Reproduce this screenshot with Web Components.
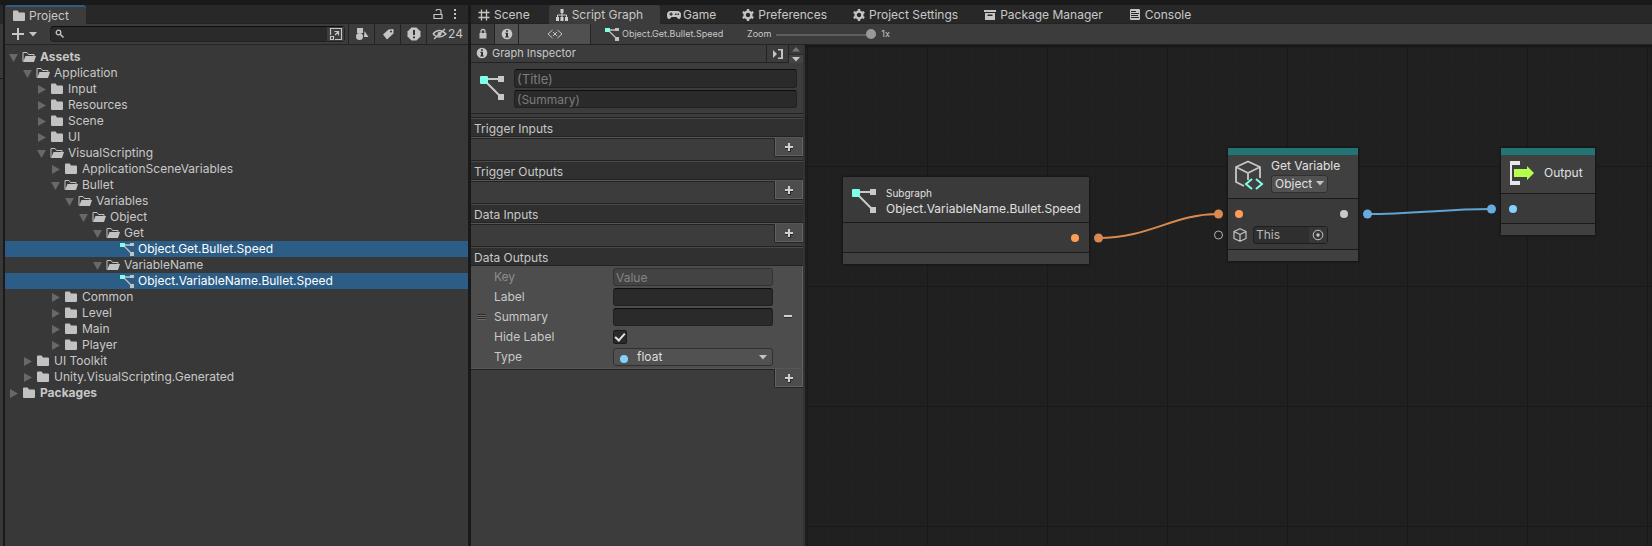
<!DOCTYPE html>
<html lang="en">
<head>
<meta charset="utf-8">
<title>Script Graph</title>
<style>
html,body{margin:0;height:100%}
body{background:#191919;color:#c8c8c8;font:12px/16px Inter,"Liberation Sans",sans-serif;overflow:hidden}
</style>
</head>
<body>
<editor-app></editor-app>
<script>
const ICONS = {
  folder:['0 0 14 14','<path fill="#c2c2c2" d="M1 2.500q0-1 1-1h3.600l1.400 2h5q1 0 1 1v6.500q0 1-1 1h-10q-1 0-1-1z"/>'],
  open:['0 0 14 14','<path fill="none" stroke="#c2c2c2" d="M1 11.500V2.500h4l1.500 2h5.500v1.500"/><path fill="#c2c2c2" d="M3.500 6h10.500l-2 6h-11z"/>'],
  graph:['0 0 14 14','<path fill="none" stroke="#c2c2c2" stroke-width="1.300" d="M3 3h8M3 3l8.500 8.500"/><path fill="#7fffe6" d="M0 1h5v4h-5z"/><path fill="#c2c2c2" d="M10 1h4v3h-4zM10 10h4v4h-4z"/>'],
  graphBig:['0 0 26 26','<path fill="none" stroke="#c8c8c8" stroke-width="2" d="M5 4h17M5 5l17 17"/><rect x="1" y="1" width="8" height="8" rx="1" fill="#7fffe6"/><path fill="#c8c8c8" d="M19 1h6v6h-6zM19 19h6v6h-6z"/>'],
  grid:['0 0 12 12','<path fill="none" stroke="#c4c4c4" stroke-width="1.300" d="M3.500 0.500v11M8.500 0.500v11M0.500 3.500h11M0.500 8.500h11"/>'],
  tree:['0 0 12 12','<path fill="#d0d0d0" d="M4.500 0h3v4h-3zM0 8h3v4h-3zM4.500 8h3v4h-3zM9 8h3v4h-3z"/><path fill="none" stroke="#d0d0d0" d="M6 3v6M1.500 9v-3h9v3"/>'],
  game:['0 0 14 12','<path fill="#c4c4c4" fill-rule="evenodd" d="M3.500 2h7a3.500 3.500 0 0 1 3.500 4c0 3-1 4.500-2.500 4q-1-.3-2-2h-5q-1 1.700-2 2C1 10.500 0 9 0 6a3.500 3.500 0 0 1 3.500-4zM3.500 3.500v1h-1v1.200h1v1h1.200v-1h1v-1.200h-1v-1zM8 4.500h1.500v1.500H8zM10.500 4.500h1.500v1.500h-1.500z"/>'],
  gear:['0 0 12 12','<circle cx="6" cy="6" r="3.400" fill="none" stroke="#c4c4c4" stroke-width="2.400"/><path stroke="#c4c4c4" stroke-width="2.400" d="M6 0v2.500M6 9.500V12M0.700 3l2.300 1.300M9 7.700L11.300 9M0.700 9L3 7.700M9 4.300L11.300 3"/>'],
  box:['0 0 12 12','<path fill="#c4c4c4" fill-rule="evenodd" d="M0 1h12v2H0zM1 4h10v7H1zM3.500 5.500v1.500h5V5.500z"/>'],
  console:['0 0 12 12','<rect x="1" y="0" width="10" height="11" rx="1" fill="#c4c4c4"/><path stroke="#282828" d="M2 2.500h5M2 4.500h8M2 6.500h7M2 8.500h8"/>'],
  search:['0 0 12 12','<circle cx="4.500" cy="4.500" r="2.300" fill="none" stroke="#c4c4c4" stroke-width="1.300"/><path stroke="#c4c4c4" stroke-width="1.500" d="M6.200 6.200l3.300 3.300"/>'],
  popout:['0 0 14 14','<path fill="none" stroke="#c4c4c4" stroke-width="1.200" d="M1.500 8V1.500h11v11H6M1.500 9.500h3v3h-3zM6 8l3.500-3.500M5.500 4.500h4v4"/>'],
  shapes:['0 0 14 14','<circle cx="4.500" cy="9.500" r="3.500" fill="#c4c4c4"/><path fill="#c4c4c4" d="M2 1h6v5H2zM9.500 4l4 6H9z"/>'],
  tag:['0 0 14 14','<path fill="#c4c4c4" fill-rule="evenodd" d="M7.500 2.500l4.500-.500q.500 0 .500.500v4l-6.500 6-4-5zM9 4.500a1 1 0 1 0 2 0a1 1 0 0 0-2 0"/>'],
  alert:['0 0 14 14','<path fill="#c4c4c4" d="M4.500.500h5l4 4v5l-4 4h-5l-4-4v-5z"/><path fill="#333" d="M6 3h2v5H6zM6 9.500h2v1.700H6z"/>'],
  eye:['0 0 16 14','<path fill="none" stroke="#c4c4c4" stroke-width="1.400" d="M1 7q6-7 13 0q-7 6-13 0M2 12L13 2"/><circle cx="7.500" cy="7" r="2" fill="#c4c4c4"/>'],
  unlock:['0 0 10 12','<path fill="none" stroke="#c4c4c4" stroke-width="1.200" d="M1 6.500h8v4H1zM8 6V3q0-1.500-1.500-1.500h-2Q3 1.500 3 3"/>'],
  lock:['0 0 10 12','<path fill="none" stroke="#c4c4c4" stroke-width="1.300" d="M3 6V3.500q0-2 2-2t2 2V6"/><path fill="#c4c4c4" d="M1.500 5h7v5.500h-7z"/>'],
  dots:['0 0 4 12','<path fill="#c4c4c4" d="M1 1h2v2H1zM1 5h2v2H1zM1 9h2v2H1z"/>'],
  info:['0 0 12 12','<circle cx="6" cy="6" r="5.300" fill="#c8c8c8"/><path fill="#333" d="M5 2.200h2v1.600H5zM4.300 4.800H7v3.700h.800v1H4.200v-1H5V5.800h-.700z"/>'],
  vars:['0 0 16 12','<path fill="none" stroke="#c4c4c4" d="M5.500 2L1 6l4.500 4M10.500 2L15 6l-4.500 4M6 4l4 4M10 4L6 8"/>'],
  plus:['0 0 12 12','<path fill="#c8c8c8" d="M5 0h2v5h5v2H7v5H5V7H0V5h5z"/>'],
  plusBold:['0 0 10 10','<path fill="#262626" d="M4 7h3v3H4zM1 6h8v1H1z"/><path fill="#d0d0d0" d="M4 1h2v3h3v2H6v3H4V6H1V4h3z"/>'],
  down:['0 0 8 5','<path fill="#c4c4c4" d="M0 0h8L4 4.500z"/>'],
  up:['0 0 8 5','<path fill="#767676" d="M0 4.500h8L4 0z"/>'],
  exp:['0 0 9 9','<path fill="#686868" d="M0 1h9L4.500 9z"/>'],
  col:['0 0 9 9','<path fill="#686868" d="M1 0v9l8-4.500z"/>'],
  dock:['0 0 10 10','<path fill="#c4c4c4" d="M0 1l4 4-4 4zM5 0h5v10H5V8.500h3v-7H5z"/>'],
  handle:['0 0 10 6','<path stroke="#292929" d="M0 .500h9M0 2.500h9M0 4.500h9"/><path stroke="#6a6a6a" d="M0 1.500h9M0 3.500h9M0 5.500h9"/>'],
  minus:['0 0 8 4','<path fill="#d0d0d0" d="M0 0h8v2H0z"/><path fill="#303030" d="M0 2h8v1H0z"/>'],
  cubeVar:['0 0 30 30','<path fill="none" stroke="#c8c8c8" stroke-width="1.800" stroke-linejoin="round" d="M10 26L2 22V7l12-5.500L26 7v11M2 7l12 6 12-6M14 13v7"/><path fill="none" stroke="#7fffe6" stroke-width="2" d="M18 19l-6 5 6 5M22 19l6 5-6 5"/>'],
  cube:['0 0 14 14','<path fill="none" stroke="#c4c4c4" stroke-width="1.200" stroke-linejoin="round" d="M1 3.500L7 .700l6 2.800v7L7 13.300l-6-2.800zM1 3.500l6 3 6-3M7 6.500v7"/>'],
  target:['0 0 12 12','<circle cx="6" cy="6" r="4.800" fill="none" stroke="#c4c4c4"/><circle cx="6" cy="6" r="1.700" fill="#c4c4c4"/>'],
  output:['0 0 26 26','<path fill="#e8e8e8" d="M1 1h10v4H3v16h8v4H1z"/><path fill="#b5ff4f" d="M5 9h13V6l7 7-7 7v-3H5z"/>']
};

function define(name, css, html, setup){
  const t = document.createElement('template');
  t.innerHTML = `<style>*{box-sizing:border-box}button,input,select{font:inherit;color:inherit;margin:0;border-radius:0}button{border:0;padding:0;background:none;display:flex;align-items:center;justify-content:center}${css}</style>${html}`;
  customElements.define(name, class extends HTMLElement{
    connectedCallback(){
      if(this.shadowRoot) return;
      this.attachShadow({mode:'open'}).append(t.content.cloneNode(true));
      if(setup) setup(this, this.shadowRoot);
    }
  });
}

customElements.define('ui-icon', class extends HTMLElement{
  static observedAttributes = ['name'];
  constructor(){ super(); this.attachShadow({mode:'open'}); }
  attributeChangedCallback(){
    const [box, body] = ICONS[this.getAttribute('name')];
    const [, , w, h] = box.split(' ');
    this.shadowRoot.innerHTML = `<style>:host{display:block;flex:none;line-height:0}svg{display:block}</style><svg viewBox="${box}" width="${w}" height="${h}" aria-hidden="true">${body}</svg>`;
  }
});

define('dock-tab', `
:host{display:flex;height:19px}
:host([active]){background:#3c3c3c;border-radius:3px 3px 0 0}
:host([focused]){border-top:2px solid #2c5d87}
button{padding:1px 19px 0 7px;gap:3px;white-space:nowrap}
:host([active]) button{padding-right:17px}
.i{width:13px;display:flex}
:host([focused]) button{padding:0 17px 0 7px}
:host([focused]) .i{width:14px}
`, '<button role="tab"><span class="i"><ui-icon></ui-icon></span><slot></slot></button>', (el, root) =>
  root.querySelector('ui-icon').setAttribute('name', el.getAttribute('icon')));

define('tree-row', `
:host{display:flex;height:16px;align-items:center;padding-left:calc(4px + var(--depth) * 14px)}
:host([selected]){background:#2c5d87;color:#fff}
:host([bold]){font-weight:700}
.a{width:9px;margin-right:4px}
.n{margin-left:4px;white-space:nowrap}
`, '<span class="a"></span><ui-icon class="k"></ui-icon><span class="n"><slot></slot></span>', (el, root) => {
  const kind = el.getAttribute('kind');
  el.style.setProperty('--depth', el.getAttribute('depth'));
  root.querySelector('.k').setAttribute('name', kind);
  if(kind !== 'graph') root.querySelector('.a').innerHTML = `<ui-icon name="${kind === 'open' ? 'exp' : 'col'}"></ui-icon>`;
});

define('project-panel', `
:host{display:flex;flex-direction:column;background:#383838;min-width:0}
.tabs{display:flex;height:19px;background:#282828;align-items:stretch;border-bottom:1px solid #232323}
.tabs .r{margin-left:auto;display:flex;align-items:center;gap:10px;padding-right:11px}
.bar{display:flex;height:21px;background:#3c3c3c;border-bottom:1px solid #232323;align-items:stretch}
.add{gap:5px;width:38px;margin-right:7px}
.search{flex:1;display:flex;align-items:center;margin:2px 3px 2px 0;background:#2a2a2a;border:1px solid #212121;border-top-color:#0d0d0d;border-radius:4px;padding-left:3px;min-width:0}
.search input{flex:1;min-width:0;background:none;border:0;outline:0;height:14px;padding:0}
.search button{width:17px;height:14px;background:#3c3c3c}
.bar>.t{width:26px;border-left:1px solid #232323}
.bar>.e{width:42px}
.tree{padding-top:4px}
`, `
<div class="tabs" role="tablist"><dock-tab focused active icon="folder">Project</dock-tab>
<div class="r"><button aria-label="Lock"><ui-icon name="unlock"></ui-icon></button><button aria-label="Menu"><ui-icon name="dots"></ui-icon></button></div></div>
<div class="bar"><button class="add" aria-label="Create"><ui-icon name="plus"></ui-icon><ui-icon name="down"></ui-icon></button>
<div class="search"><ui-icon name="search"></ui-icon><input type="text" aria-label="Search"><button aria-label="Open search"><ui-icon name="popout"></ui-icon></button></div>
<button class="t" aria-label="Type"><ui-icon name="shapes"></ui-icon></button><button class="t" aria-label="Label"><ui-icon name="tag"></ui-icon></button><button class="t" aria-label="Log type"><ui-icon name="alert"></ui-icon></button><button class="t e"><ui-icon name="eye"></ui-icon>24</button></div>
<div class="tree" role="tree"></div>`, (el, root) => {
  const rows = [[0,'open','Assets'],[1,'open','Application'],[2,'folder','Input'],[2,'folder','Resources'],[2,'folder','Scene'],[2,'folder','UI'],[2,'open','VisualScripting'],[3,'folder','ApplicationSceneVariables'],[3,'open','Bullet'],[4,'open','Variables'],[5,'open','Object'],[6,'open','Get'],[7,'graph','Object.Get.Bullet.Speed'],[6,'open','VariableName'],[7,'graph','Object.VariableName.Bullet.Speed'],[3,'folder','Common'],[3,'folder','Level'],[3,'folder','Main'],[3,'folder','Player'],[1,'folder','UI Toolkit'],[1,'folder','Unity.VisualScripting.Generated'],[0,'folder','Packages']];
  root.querySelector('.tree').innerHTML = rows.map(([d,k,n]) =>
    `<tree-row role="treeitem" depth="${d}" kind="${k}" ${k === 'graph' ? 'selected' : ''} ${d ? '' : 'bold'}>${n}</tree-row>`).join('');
});

define('port-section', `
:host{display:block}
h3{margin:0;height:19px;padding:1px 3px 0;font:inherit;line-height:17px;background:#303030;border-top:1px solid #484848;border-bottom:1px solid #232323}
.line{border-top:1px solid #565656;display:flex;height:24px;border-bottom:1px solid #232323}
.line::before{content:"";flex:1;border-top:1px solid #232323}
button{width:28px;height:18px;background:#4d4d4d;border:1px solid #626262;border-top:0;box-shadow:-1px 0 #232323,0 1px #232323}
:host([last]) .line{border-bottom:0}
`, '<h3></h3><slot></slot><div class="line"><button aria-label="Add"><ui-icon name="plusBold"></ui-icon></button></div>', (el, root) =>
  root.querySelector('h3').textContent = el.getAttribute('heading'));

define('port-editor', `
:host{display:grid;box-sizing:border-box;grid-template-columns:23px 1fr 29px;align-items:center;background:#4d4d4d;height:102px;border-right:1px solid #626262}
.h{padding-left:6px}
.rows{display:grid;grid-template-columns:119px 1fr;grid-auto-rows:20px;align-items:center}
label{height:19px;line-height:18px}
input[type=text],.sel{width:100%;height:18px;background:#2a2a2a;border:1px solid #212121;border-top-color:#0d0d0d;border-radius:3px;padding:0 2px;outline:0}
input:disabled{background:#434343!important;border-color:#323232!important}
input::placeholder{color:#838383;opacity:1}
.dim{color:#8c8c8c}
.c{appearance:none;width:14px;height:14px;background:#2a2a2a;border:1px solid #191919;border-radius:2px;display:grid;place-items:center}
.c:checked::after{content:"";width:8px;height:4px;border:solid #e4e4e4;border-width:0 0 2px 2px;transform:translateY(-1px) rotate(-48deg)}
.sel{display:flex;align-items:center;background:#515151;border-color:#303030;padding:0 5px 0 6px;gap:8px}
.dot{width:8px;height:8px;border-radius:50%;background:#84d2fb;margin-top:3px}
select{appearance:none;background:none;border:0;flex:1;outline:0;padding:0 1px;line-height:16px;color:#dedede}
`, `
<span class="h"><ui-icon name="handle"></ui-icon></span>
<div class="rows">
<label class="dim" for="k">Key</label><input id="k" type="text" placeholder="Value" disabled>
<label for="l">Label</label><input id="l" type="text">
<label for="s">Summary</label><input id="s" type="text">
<label for="h">Hide Label</label><input id="h" class="c" type="checkbox" checked>
<label for="t">Type</label><span class="sel"><span class="dot"></span><select id="t"><option>float</option></select><ui-icon name="down"></ui-icon></span>
</div>
<button aria-label="Remove"><ui-icon name="minus"></ui-icon></button>`);

define('graph-inspector', `
:host{display:block;background:#3c3c3c;border-right:2px solid #333}
.head{display:flex;height:18px;border-bottom:1px solid #232323}
h2{flex:1;margin:0;font:inherit;font-size:11px;display:flex;align-items:center;gap:4px;padding:0 0 1px 5px;line-height:16px}
.dock{width:22px;border-left:1px solid #232323}
.sc{width:15px;display:grid;grid-template-rows:9px 9px;border-left:1px solid #232323}
.sc button+button{border-top:1px solid #2b2b2b;background:#444}
.sc button{background:#383838}
.meta{display:grid;grid-template-columns:26px 1fr;gap:9px;padding:6px 6px 4px 8px;height:51px;border-bottom:1px solid #232323}
.meta ui-icon{margin-top:6px}
.f{display:grid;gap:2px;grid-template-rows:19px 18px}
input{width:100%;min-width:0;background:#2a2a2a;border:1px solid #212121;border-top-color:#0d0d0d;border-radius:3px;padding:1px 2px 0;outline:0}
.title{font-size:13px}
input::placeholder{color:#7c7c7c;opacity:1}
.gap{height:4px;border-bottom:1px solid #232323}
`, `
<div class="head"><h2><ui-icon name="info"></ui-icon>Graph Inspector</h2><button class="dock" aria-label="Dock"><ui-icon name="dock"></ui-icon></button><div class="sc"><button aria-label="Up"><ui-icon name="up"></ui-icon></button><button aria-label="Down"><ui-icon name="down"></ui-icon></button></div></div>
<div class="meta"><ui-icon name="graphBig"></ui-icon><div class="f"><input class="title" type="text" aria-label="Title" placeholder="(Title)"><input type="text" aria-label="Summary" placeholder="(Summary)"></div></div>
<div class="gap"></div>
<port-section heading="Trigger Inputs"></port-section>
<port-section heading="Trigger Outputs"></port-section>
<port-section heading="Data Inputs"></port-section>
<port-section heading="Data Outputs" last><port-editor></port-editor></port-section>`);

define('graph-node', `
:host{position:absolute;display:flex;flex-direction:column;background:#3a3a3a;border:1px solid #181818;border-radius:3px;box-shadow:0 0 2px #141414;color:#e0e0e0;box-sizing:border-box}
.accent{display:none;height:7px;background:#237575}
:host([accent]) .accent{display:block}
header{display:flex;flex:1;background:#404040;border-bottom:1px solid #1a1a1a}
:host(:not([accent])) header{background:#3a3a3a}
footer{height:12px;background:#404040;border-top:1px solid #1a1a1a}
`, '<div class="accent"></div><header><slot name="head"></slot></header><slot></slot><footer></footer>');

define('graph-canvas', `
:host{display:block;position:relative;overflow:hidden;min-width:0;background-color:#202020;
background-image:linear-gradient(90deg,#191919 1px,transparent 1px),linear-gradient(#191919 1px,transparent 1px),linear-gradient(90deg,#1e1e1e 1px,transparent 1px),linear-gradient(#1e1e1e 1px,transparent 1px);
background-size:120px 120px,120px 120px,24px 24px,24px 24px;background-position:2px 0,0 1px,2px 0,0 1px;box-shadow:inset 0 2px 2px #181818}
.wires{position:absolute;left:0;top:0}
.sub{left:37px;top:131px;width:248px;height:89px}
.get{left:422px;top:102px;width:132px;height:115px}
.out{left:695px;top:102px;width:96px;height:89px}
.h{display:flex;align-items:center;width:100%;white-space:nowrap}
.sub .h{padding:2px 0 0 8px;gap:9px}
.sub small{display:block;font-size:10px;line-height:16px}
.get .h{padding:0 0 3px 6px;gap:7px}
.get .h>div{display:grid;gap:1px}
.out .h{padding:0 0 2px 8px;gap:9px}
.row{display:flex;align-items:center;height:29px;padding:0 10px}
.out .row{padding:0 8px}
.dot{width:8px;height:8px;border-radius:50%}
.o{background:#ff9d57}.b{background:#84d2fb}.g{background:#c8c8c8}
.r{margin-left:auto}
.get .ports{height:50px;padding:6px 0 0}
.get .row{height:18px;padding:0 10px 0 7px}
.dd{display:flex;align-items:center;width:57px;height:18px;background:#515151;border:1px solid #303030;border-radius:3px;padding:0 0 0 3px}
.dd select{appearance:none;background:none;border:0;outline:0;padding:0;width:41px;flex:none;line-height:16px}
.field{display:flex;align-items:center;width:75px;height:18px;background:#2f2f2f;border:1px solid #1f1f1f;border-radius:3px}
.field input{width:55px;height:16px;background:none;border:0;padding:0 2px;outline:0;color:#bcbcbc}
.field button{width:18px;height:16px;background:#373737}
.this{display:flex;align-items:center;gap:6px;padding:3px 0 0 5px}
`, `
<svg class="wires" width="720" height="300" fill="none" stroke-width="2">
<path d="M293 193C345 193 368 169 413 169" stroke="#d98a50"/><path d="M562 169C610 169 640 164 686 164" stroke="#5fa5d4"/>
<g stroke="none"><circle cx="293.500" cy="193" r="4.500" fill="#d98a50"/><circle cx="413.500" cy="169" r="4.500" fill="#d98a50"/><circle cx="562.500" cy="169" r="4.500" fill="#68abdd"/><circle cx="686.500" cy="164" r="4.500" fill="#68abdd"/></g>
<circle cx="413.500" cy="190" r="4" stroke="#b0b0b0" stroke-width="1"/></svg>
<graph-node class="sub"><div slot="head" class="h"><ui-icon name="graphBig"></ui-icon><div><small>Subgraph</small>Object.VariableName.Bullet.Speed</div></div>
<div class="row"><span class="dot o r"></span></div></graph-node>
<graph-node class="get" accent><div slot="head" class="h"><ui-icon name="cubeVar"></ui-icon><div><label for="kind">Get Variable</label><span class="dd"><select id="kind"><option>Object</option></select><ui-icon name="down"></ui-icon></span></div></div>
<div class="ports"><div class="row"><span class="dot o"></span><span class="dot g r"></span></div><div class="this"><ui-icon name="cube"></ui-icon><span class="field"><input type="text" aria-label="Target" value="This"><button aria-label="Pick object"><ui-icon name="target"></ui-icon></button></span></div></div></graph-node>
<graph-node class="out" accent><div slot="head" class="h"><ui-icon name="output"></ui-icon>Output</div><div class="row"><span class="dot b"></span></div></graph-node>`);

define('graph-window', `
:host{display:flex;flex-direction:column;min-width:0;background:#3c3c3c}
.tabs{display:flex;height:19px;background:#282828;border-bottom:1px solid #232323}
.bar{display:flex;height:21px;border-bottom:1px solid #232323;font-size:9px;align-items:stretch;white-space:nowrap}
.bar>button{border-right:1px solid #232323;width:24px}
.bar>.on{background:#505050}
.bar>.v{width:72px}
.path{display:flex;align-items:center;gap:3px;margin-left:14px;width:142px}
.z{display:flex;align-items:center;gap:5px}
input{appearance:none;width:100px;height:10px;background:linear-gradient(#5e5e5e,#5e5e5e) 0 5px/100% 2px no-repeat}
input::-webkit-slider-thumb{appearance:none;width:10px;height:10px;border-radius:50%;background:#999}
.main{flex:1;display:grid;grid-template-columns:334px 1fr;min-height:0}
`, `
<div class="tabs" role="tablist"><dock-tab icon="grid">Scene</dock-tab><dock-tab active icon="tree">Script Graph</dock-tab><dock-tab icon="game">Game</dock-tab><dock-tab icon="gear">Preferences</dock-tab><dock-tab icon="gear">Project Settings</dock-tab><dock-tab icon="box">Package Manager</dock-tab><dock-tab icon="console">Console</dock-tab></div>
<div class="bar"><button aria-label="Lock"><ui-icon name="lock"></ui-icon></button><button class="on" aria-label="Inspector"><ui-icon name="info"></ui-icon></button><button class="on v" aria-label="Variables"><ui-icon name="vars"></ui-icon></button>
<span class="path"><ui-icon name="graph"></ui-icon>Object.Get.Bullet.Speed</span><span class="z"><label for="zoom">Zoom</label><input id="zoom" type="range" value="100"><output for="zoom">1x</output></span></div>
<div class="main"><graph-inspector></graph-inspector><graph-canvas></graph-canvas></div>`);

define('editor-app', `
:host{display:grid;height:100vh;grid-template-columns:3px minmax(0,465fr) minmax(0,1184fr);padding-top:5px;box-sizing:border-box}
.edge{background:#383838;border-top:19px solid #282828}
.edge::before{content:"";display:block;height:54px;border-bottom:1px solid #191919}
project-panel{margin-left:2px}
graph-window{margin-left:3px}
`, '<div class="edge"></div><project-panel></project-panel><graph-window></graph-window>');
</script>
</body>
</html>
